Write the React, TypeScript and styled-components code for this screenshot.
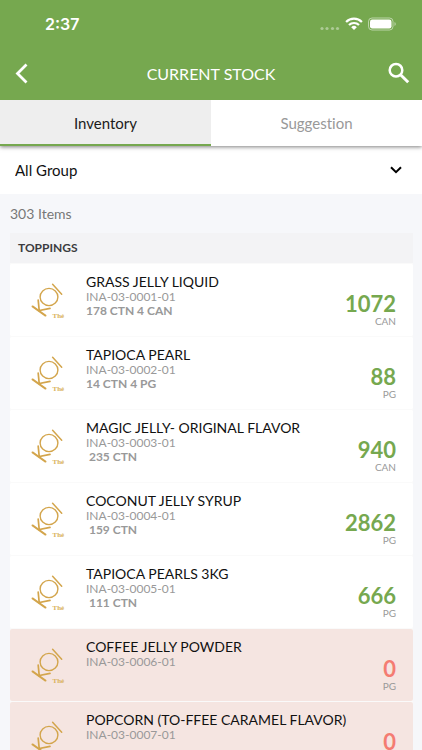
import React, { useState } from "react";
import styled, { createGlobalStyle } from "styled-components";

const GlobalStyle = createGlobalStyle`
  *, *::before, *::after { box-sizing: border-box; }
  html, body { margin: 0; padding: 0; }
  body {
    background: #f6f7fa;
    font-family: Lato, "Open Sans", sans-serif;
    font-variant-ligatures: none;
    color: #111;
  }
  h1, h2, h3, p, ul { margin: 0; padding: 0; font-weight: 400; }
  button, select { font-family: inherit; font-variant-ligatures: none; }
`;

const Screen = styled.div`
  display: flex;
  flex-direction: column;
  height: 100vh;
  overflow: hidden;
  background: #f6f7fa;
`;

const TopArea = styled.header`
  position: relative;
  z-index: 2;
  flex: none;
  background: #76a84f;
  color: #fff;
`;

const StatusBar = styled.div`
  display: flex;
  align-items: center;
  justify-content: space-between;
  height: 48px;
  padding: 0 25px 0 45px;
`;

const Clock = styled.time`
  font: 600 16px/48px Inter, "Liberation Sans", sans-serif;
`;

const StatusIcons = styled.svg`
  display: block;
`;

const NavBar = styled.div`
  display: grid;
  grid-template-columns: 44px 1fr 44px;
  align-items: center;
  height: 52px;
`;

const NavButton = styled.button`
  display: flex;
  align-items: center;
  justify-content: center;
  height: 48px;
  padding: 0;
  border: 0;
  background: none;
  color: #fff;
  cursor: pointer;
`;

const Title = styled.h1`
  font-size: 16px;
  line-height: 24px;
  text-align: center;
`;

const Tabs = styled.div`
  position: relative;
  z-index: 1;
  flex: none;
  display: flex;
  height: 46px;
  background: #fff;
  box-shadow: 0 1px 4px rgba(0, 0, 0, 0.5);
`;

const Tab = styled.button<{ $active: boolean }>`
  flex: 1;
  padding: 0;
  border: 0;
  box-shadow: inset 0 -2px ${(p) => (p.$active ? "#76a84f" : "#fff")};
  background: ${(p) => (p.$active ? "#eeeeee" : "#fff")};
  color: ${(p) => (p.$active ? "#1c1c1c" : "#999")};
  font-size: 15px;
  line-height: 20px;
  cursor: pointer;
`;

const GroupField = styled.div`
  flex: none;
  display: grid;
  align-items: center;
  height: 48px;
  background: #fff;

  > * { grid-area: 1 / 1; }
`;

const GroupSelect = styled.select`
  width: 100%;
  height: 48px;
  padding: 0 40px 0 15px;
  border: 0;
  border-radius: 0;
  appearance: none;
  background: transparent;
  color: #111;
  font-size: 15px;
`;

const SelectArrow = styled.svg`
  justify-self: end;
  margin-right: 20px;
  pointer-events: none;
`;

const Content = styled.main`
  flex: 1;
  min-height: 0;
  padding: 0 9px 0 10px;
  overflow-y: auto;
  scrollbar-width: none;
`;

const Count = styled.p`
  padding: 10px 0 9px;
  color: #777;
  font-size: 14px;
  line-height: 20px;
`;

const GroupTitle = styled.h2`
  padding: 0 8px;
  background: #f3f3f5;
  color: #3c3c3f;
  font-size: 12px;
  font-weight: 700;
  line-height: 30px;
`;

const ItemList = styled.ul`
  display: flex;
  flex-direction: column;
  gap: 1px;
  padding-top: 1px;
  background: #fafafa;
  list-style: none;
`;

const ItemRow = styled.li<{ $empty: boolean }>`
  display: flex;
  height: 72px;
  padding: 9px 17px 0 20px;
  border-radius: 2px;
  background: ${(p) => (p.$empty ? "#f5e5e1" : "#fff")};
`;

const Logo = styled.svg`
  flex: none;
  width: 36px;
  height: 48px;
`;

const LogoText = styled.text`
  font: 700 7px "Liberation Serif", serif;
`;

const Details = styled.div`
  flex: 1;
  min-width: 0;
  padding-left: 20px;
`;

const ItemName = styled.h3`
  font-size: 14px;
  line-height: 17px;
  white-space: nowrap;
`;

const ItemCode = styled.p`
  color: #999;
  font-size: 12px;
  line-height: 14px;
`;

const ItemPack = styled.p`
  color: #999;
  font-size: 12px;
  font-weight: 700;
  line-height: 14px;
  white-space: pre;
`;

const Stock = styled.div`
  flex: none;
  padding-top: 19px;
  text-align: right;
`;

const Quantity = styled.p<{ $empty: boolean }>`
  color: ${(p) => (p.$empty ? "#f47c72" : "#76a84f")};
  font-size: 22px;
  font-weight: 700;
  line-height: 24px;
`;

const Unit = styled.p`
  color: #999;
  font-size: 10px;
  line-height: 10px;
`;

type Item = { name: string; code: string; pack: string; quantity: number; unit: string };

const items: Item[] = [
  { name: "GRASS JELLY LIQUID", code: "INA-03-0001-01", pack: "178 CTN 4 CAN", quantity: 1072, unit: "CAN" },
  { name: "TAPIOCA PEARL", code: "INA-03-0002-01", pack: "14 CTN 4 PG", quantity: 88, unit: "PG" },
  { name: "MAGIC JELLY- ORIGINAL FLAVOR", code: "INA-03-0003-01", pack: " 235 CTN", quantity: 940, unit: "CAN" },
  { name: "COCONUT JELLY SYRUP", code: "INA-03-0004-01", pack: " 159 CTN", quantity: 2862, unit: "PG" },
  { name: "TAPIOCA PEARLS 3KG", code: "INA-03-0005-01", pack: " 111 CTN", quantity: 666, unit: "PG" },
  { name: "COFFEE JELLY POWDER", code: "INA-03-0006-01", pack: "", quantity: 0, unit: "PG" },
  { name: "POPCORN (TO-FFEE CARAMEL FLAVOR)", code: "INA-03-0007-01", pack: "", quantity: 0, unit: "PG" },
];

function KoiLogo() {
  return (
    <Logo viewBox="0 1 36 48" role="img" aria-label="KOI Thé">
      <g fill="none" stroke="#d3a54c" strokeLinecap="round">
        <path d="M22.6 12.2 31.7 22.2" strokeWidth="1.5" />
        <ellipse cx="19" cy="25" rx="8.9" ry="8.6" strokeWidth="1.4" />
        <path d="M2.5 34.4 15.5 43.6" strokeWidth="1.9" />
        <path d="M8.2 28.2 9.2 38.6 20 36.4" strokeWidth="1.7" />
      </g>
      <LogoText x="22.5" y="45.5" fill="#d9b25c">Thé</LogoText>
    </Logo>
  );
}

function StatusGlyphs() {
  return (
    <StatusIcons width="78" height="16" viewBox="0 0 78 16" role="img" aria-label="Wi-Fi connected, battery full">
      <g fill="#fff" opacity="0.4">
        <circle cx="3" cy="12.5" r="1.6" />
        <circle cx="8" cy="12.5" r="1.6" />
        <circle cx="13.5" cy="12.5" r="1.6" />
        <circle cx="18.5" cy="12.5" r="1.6" />
      </g>
      <g fill="none" stroke="#fff" strokeWidth="2.2">
        <path d="M27.1 6A11 11 0 0 1 42.9 6" />
        <path d="M30 9.1A7 7 0 0 1 40 9.1" />
      </g>
      <path d="M32.2 11.2A4 4 0 0 1 37.8 11.2L35 14Z" fill="#fff" />
      <rect x="49.5" y="2" width="24.5" height="12" rx="3.5" fill="none" stroke="#fff" strokeOpacity="0.5" />
      <rect x="51" y="3.5" width="21.5" height="9" rx="2.2" fill="#fff" />
      <path d="M75.5 6v4a2.2 2.2 0 0 0 0-4Z" fill="#fff" opacity="0.5" />
    </StatusIcons>
  );
}

export default function App() {
  const [tab, setTab] = useState("Inventory");

  return (
    <Screen>
      <GlobalStyle />
      <TopArea>
        <StatusBar>
          <Clock>2:37</Clock>
          <StatusGlyphs />
        </StatusBar>
        <NavBar>
          <NavButton type="button" aria-label="Back">
            <svg width="24" height="24" viewBox="0 0 24 24" fill="none" stroke="currentColor" strokeWidth="2.8">
              <path d="M16.5 2.5 7.5 11.5 16.5 20.5" />
            </svg>
          </NavButton>
          <Title>CURRENT STOCK</Title>
          <NavButton type="button" aria-label="Search">
            <svg width="24" height="24" viewBox="0 0 24 24" fill="none" stroke="currentColor">
              <circle cx="8" cy="8.2" r="6.3" strokeWidth="2.5" />
              <path d="M12.3 12.5 20.2 20.2" strokeWidth="3" />
            </svg>
          </NavButton>
        </NavBar>
      </TopArea>

      <Tabs role="tablist">
        {["Inventory", "Suggestion"].map((name) => (
          <Tab key={name} type="button" role="tab" aria-selected={tab === name} $active={tab === name} onClick={() => setTab(name)}>
            {name}
          </Tab>
        ))}
      </Tabs>

      <GroupField>
        <GroupSelect aria-label="Group" defaultValue="all">
          <option value="all">All Group</option>
          <option value="toppings">Toppings</option>
        </GroupSelect>
        <SelectArrow width="12" height="8" viewBox="0 0 12 8" fill="none" stroke="#000" strokeWidth="2" aria-hidden="true">
          <path d="M1 1.2 6 6.2 11 1.2" />
        </SelectArrow>
      </GroupField>

      <Content>
        <Count>303 Items</Count>
        <GroupTitle>TOPPINGS</GroupTitle>
        <ItemList>
          {items.map((item) => (
            <ItemRow key={item.code} $empty={item.quantity === 0}>
              <KoiLogo />
              <Details>
                <ItemName>{item.name}</ItemName>
                <ItemCode>{item.code}</ItemCode>
                {item.pack && <ItemPack>{item.pack}</ItemPack>}
              </Details>
              <Stock>
                <Quantity $empty={item.quantity === 0}>{item.quantity}</Quantity>
                <Unit>{item.unit}</Unit>
              </Stock>
            </ItemRow>
          ))}
        </ItemList>
      </Content>
    </Screen>
  );
}
